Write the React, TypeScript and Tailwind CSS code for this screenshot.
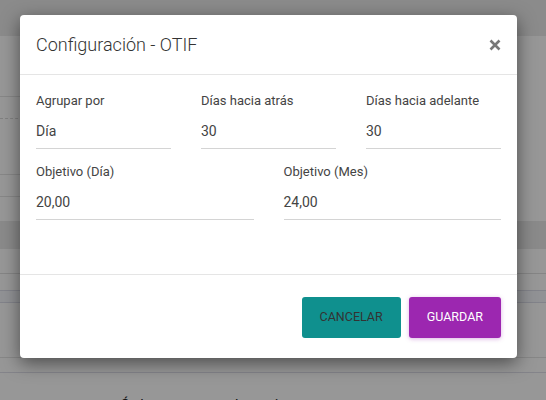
import React from 'react';

const fields = [
  { label: 'Agrupar por', value: 'Día' },
  { label: 'Días hacia atrás', value: '30' },
  { label: 'Días hacia adelante', value: '30' },
];

const goals = [
  { label: 'Objetivo (Día)', value: '20,00' },
  { label: 'Objetivo (Mes)', value: '24,00' },
];

const Field = ({ label, value }: { label: string; value: string }) => (
  <div className="flex flex-col">
    <label className="text-[13px] leading-[18px] text-[#444]">{label}</label>
    <div className="mt-[11px] border-b border-[#d4d4d4] pb-[7px] text-[14px] leading-[20px] text-[#444]">
      {value}
    </div>
  </div>
);

const App = () => {
  return (
    <div className="relative h-[400px] overflow-hidden bg-[#fcfcfc] font-['Roboto',sans-serif]">
      {/* page behind the dialog */}
      <div className="h-[36px] bg-[#e8e8e8]" />
      <div className="w-[300px]">
        <div className="h-[61px] border-b border-[#e2e2e2]" />
        <div className="h-[22px] border-b border-dashed border-[#d8d8d8]" />
        <div className="h-[56px] border-b border-[#e2e2e2]" />
        <div className="h-[22px] border-b border-[#e2e2e2]" />
      </div>
      <div className="mt-[24px] h-[28px] bg-[#e6e6e6]" />
      <div className="h-[25px] border-b border-[#dedede]" />
      <div className="h-[16px]" />
      <div className="h-[13px] border-y border-[#d9dbe6] bg-[#f2f3f8]" />
      <div className="h-[55px] border-b border-[#e2e2e2]" />
      <div className="h-[15px] border-b border-[#dcdde6]" />
      <div className="pl-[120px] pt-[22px] text-[15px] leading-[20px] text-[#222]">Órdenes entregadas a tiempo</div>

      {/* overlay + dialog */}
      <div className="absolute inset-0 bg-black/40 pl-[20px] pt-[15px]">
        <div className="w-[497px] rounded-[4px] bg-white shadow-[0_5px_18px_rgba(0,0,0,0.5)]">
          <div className="flex h-[60px] items-center justify-between border-b border-[#e5e5e5] px-4">
            <h2 className="text-[18px] font-light text-[#333]">Configuración - OTIF</h2>
            <button className="text-[#777]">
              <svg width="12" height="12" viewBox="0 0 12 12">
                <path d="M1.5 1.5L10.5 10.5M10.5 1.5L1.5 10.5" stroke="currentColor" strokeWidth="2.6" />
              </svg>
            </button>
          </div>
          <div className="h-[200px] border-b border-[#e5e5e5] px-4 pt-[17px]">
            <div className="grid grid-cols-3 gap-x-[30px]">
              {fields.map((f) => (
                <Field key={f.label} label={f.label} value={f.value} />
              ))}
            </div>
            <div className="mt-[14px] grid grid-cols-2 gap-x-[30px]">
              {goals.map((f) => (
                <Field key={f.label} label={f.label} value={f.value} />
              ))}
            </div>
          </div>
          <div className="flex justify-end gap-2 px-4 pt-[22px] pb-[20px]">
            <button className="h-[41px] rounded-[3px] bg-[#0f908e] px-[18px] text-[12.5px] text-[#333]">
              CANCELAR
            </button>
            <button className="h-[41px] rounded-[3px] bg-[#9c27b0] px-[18px] text-[12.5px] text-white shadow-[0_1px_4px_rgba(156,39,176,0.35)]">
              GUARDAR
            </button>
          </div>
        </div>
      </div>
    </div>
  );
};

export default App;
